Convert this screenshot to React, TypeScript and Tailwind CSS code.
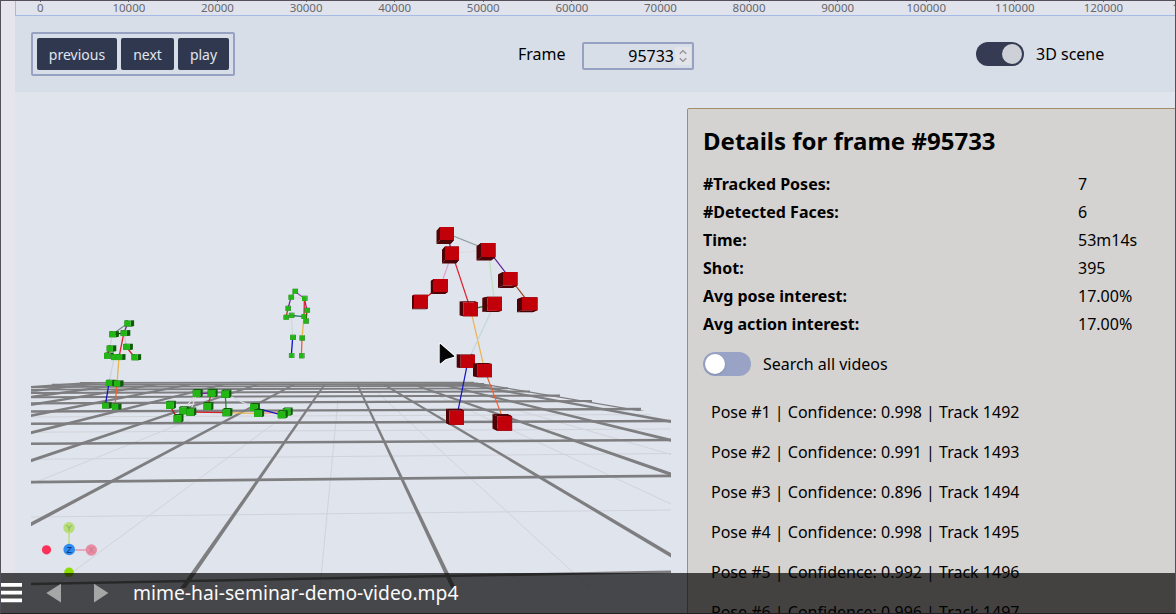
import React from "react";

type Pt = [number, number];

const ticks = Array.from({ length: 14 }, (_, i) => i * 10000);

const details: [string, string][] = [
  ["#Tracked Poses:", "7"],
  ["#Detected Faces:", "6"],
  ["Time:", "53m14s"],
  ["Shot:", "395"],
  ["Avg pose interest:", "17.00%"],
  ["Avg action interest:", "17.00%"],
];

const poses: [number, string, number][] = [
  [1, "0.998", 1492],
  [2, "0.991", 1493],
  [3, "0.896", 1494],
  [4, "0.998", 1495],
  [5, "0.992", 1496],
  [6, "0.996", 1497],
];

// Floor grid: rows run across the floor, rays recede towards the horizon.
const rows: [number, number, number, number, number][] = [
  [31, 584, 671, 571.7, 2.6],
  [31, 482.2, 671, 475.8, 2.7],
  [31, 443.8, 671, 440, 2.5],
  [31, 423.7, 671, 421, 2.4],
  [31, 411.5, 641, 409, 2.3],
  [31, 403.3, 592, 401, 2.2],
  [31, 397.2, 560, 395.6, 2.1],
  [31, 393, 530, 391.4, 2],
  [31, 389.6, 508, 388.4, 1.9],
  [31, 387, 492, 385.8, 1.9],
  [52, 384.8, 484, 384, 1.9],
  [80, 382.9, 474, 382.5, 1.7],
];

// x1, y1 (far), x2, y2 (near), width at the near end
const rays: [number, number, number, number, number][] = [
  [325, 384, 183, 588, 4.4],
  [293, 385, 31, 524.3, 3.6],
  [256, 385, 31, 460.7, 3.2],
  [225, 384, 31, 432.7, 3],
  [192, 384, 31, 415.7, 2.8],
  [159, 384, 31, 404.7, 2.6],
  [125, 384, 31, 397, 2.4],
  [92, 384, 31, 391.3, 2],
  [95, 382.6, 31, 387, 2],
  [357, 384, 453.5, 588, 4.2],
  [383, 384, 671, 555.3, 3.8],
  [412, 384, 671, 474.3, 3.3],
  [440, 384, 671, 440.3, 3],
  [466, 384, 671, 421.7, 2.8],
  [473, 382.4, 641, 411, 1.2],
];

const faint: [number, number, number, number][] = [
  [31, 517, 671, 510],
  [31, 459.3, 671, 453.5],
  [31, 432.2, 671, 429],
  [31, 417, 650, 414.5],
  [338, 400, 320, 588],
  [283, 417, 51, 588],
  [190, 420, 31, 484],
  [377, 392, 590, 588],
  [430, 392, 671, 504],
  [517, 410, 671, 454.5],
];

const redCubes: number[][] = [
  [440, 227, 14, 13, -3.5, 4],
  [445, 246.5, 14, 13.5, -3, 3.5],
  [481, 243, 14.5, 14, -4.5, 3.5],
  [503, 272, 14.5, 13.5, -5, 2.5],
  [522, 297.3, 15.5, 13, -5, 2],
  [433.8, 279, 14, 13, -3, 2],
  [414, 294.8, 14, 13.5, -2, 1],
  [463.3, 302.3, 14.5, 14, -3.7, -1],
  [487.3, 296.8, 14.7, 14, -5, 1.3],
  [460.7, 354.8, 14.3, 13.2, -4, -0.5],
  [477.7, 364, 14.3, 13.2, -4.7, -1],
  [449.3, 410.5, 14.7, 14.3, -3.3, -1.7],
  [497.3, 416.2, 14.8, 14.5, -4.8, -2.2],
];

const redBones: [number, number, string][] = [
  [0, 2, "#8c9a9c"],
  [0, 1, "#6b2a86"],
  [1, 2, "#e3d7dc"],
  [2, 3, "#5c1a94"],
  [3, 4, "#96401c"],
  [1, 5, "#d8a3cf"],
  [5, 6, "#d01018"],
  [1, 7, "#e0202c"],
  [2, 8, "#c0e0bd"],
  [7, 8, "#1d7a35"],
  [7, 10, "#eab44c"],
  [8, 9, "#c2d6dc"],
  [9, 11, "#1414c4"],
  [10, 12, "#f2602f"],
];

const figures: { w: number; h: number; ox: number; oy: number; pts: Pt[]; bones: [number, number, string][] }[] = [
  {
    w: 6.2, h: 5.8, ox: 3.4, oy: -0.4,
    pts: [[127.6, 323.5], [112.4, 334.3], [123.8, 333.2], [109.8, 348.6], [126.4, 347], [107.2, 355.8], [134.6, 357.3], [114.2, 357.2], [119, 357.2], [109, 383], [117, 383.6], [105.3, 405.6], [115, 406.8]],
    bones: [[0, 1, "#808a92"], [0, 2, "#702a86"], [1, 2, "#303030"], [1, 3, "#d8d0dc"], [3, 5, "#c01418"], [2, 4, "#d9c4d2"], [4, 6, "#d01820"], [2, 8, "#e0202c"], [7, 9, "#cdd5dd"], [8, 10, "#eab44c"], [9, 11, "#1414c4"], [10, 12, "#f2602f"]],
  },
  {
    w: 4.7, h: 4.8, ox: 0.7, oy: -0.3,
    pts: [[295, 291.4], [291, 297.4], [304.4, 298.5], [288, 308.5], [307, 310.4], [286, 317.4], [306, 321], [291.3, 315.5], [304, 316.6], [292.7, 337.5], [302, 338], [291.3, 355.6], [301.4, 355.8]],
    bones: [[0, 1, "#8c9a9c"], [0, 2, "#a050bc"], [1, 2, "#ddd8df"], [1, 3, "#7a2a9b"], [3, 5, "#b04030"], [2, 4, "#b02070"], [4, 6, "#d01018"], [2, 8, "#e0202c"], [7, 8, "#27796d"], [7, 9, "#ced8dd"], [8, 10, "#eab44c"], [9, 11, "#1414c4"], [10, 12, "#f2602f"]],
  },
  {
    w: 7.6, h: 7, ox: 2.3, oy: -1.1,
    pts: [[196.6, 393.6], [211.5, 393.4], [225.3, 394.2], [169.8, 405.3], [207.3, 406.6], [182.8, 410.8], [190.2, 412.2], [177.4, 418.7], [226.3, 412.7], [253.8, 407.5], [258, 413.5], [286.6, 412], [281.6, 414.8]],
    bones: [[0, 1, "#7422a0"], [1, 4, "#a04018"], [0, 5, "#d8d5e0"], [0, 6, "#e1d5da"], [3, 7, "#b01020"], [6, 8, "#d8202a"], [2, 8, "#208a2a"], [2, 9, "#d5dde4"], [8, 10, "#eab44c"], [10, 11, "#f5a38a"], [9, 12, "#1414c4"]],
  },
];

function Cube({ x, y, w, h, ox, oy, face, side }: { x: number; y: number; w: number; h: number; ox: number; oy: number; face: string; side: string }) {
  const c: Pt[] = [[x, y], [x + w, y], [x + w, y + h], [x, y + h]];
  return (
    <g>
      {c.map(([ax, ay], i) => {
        const [bx, by] = c[(i + 1) % 4];
        return <polygon key={i} fill={side} points={`${ax},${ay} ${bx},${by} ${bx + ox},${by + oy} ${ax + ox},${ay + oy}`} />;
      })}
      <rect x={x} y={y} width={w} height={h} fill={face} />
    </g>
  );
}

function Ray({ x1, y1, x2, y2, width }: { x1: number; y1: number; x2: number; y2: number; width: number }) {
  const length = Math.hypot(x2 - x1, y2 - y1);
  // horizontal extent of a one pixel thick stroke along this direction
  const spread = length / Math.abs(y2 - y1) / 2;
  const far = Math.min(1.9, width) * spread;
  const near = width * spread;
  return <polygon points={`${x1 - far},${y1} ${x1 + far},${y1} ${x2 + near},${y2} ${x2 - near},${y2}`} />;
}

function Scene() {
  const center = (c: number[]): Pt => [c[0] + c[2] / 2, c[1] + c[3] / 2];
  return (
    <svg className="block h-[480px] w-[640px]" viewBox="31 108 640 480">
      <g stroke="#d1d3da" strokeWidth="1">
        {faint.map(([a, b, c, d], i) => <line key={i} x1={a} y1={b} x2={c} y2={d} />)}
      </g>
      <g stroke="#7e7e80">
        {rows.map(([a, b, c, d, w], i) => <line key={i} x1={a} y1={b} x2={c} y2={d} strokeWidth={w} />)}
      </g>
      <g fill="#7e7e80">
        {rays.map(([a, b, c, d, w], i) => {
          // carry the ray slightly past the viewport so its cut end stays vertical
          const t = c === 31 || c === 671 ? 1.05 : 1;
          return <Ray key={i} x1={a} y1={b} x2={a + (c - a) * t} y2={b + (d - b) * t} width={w} />;
        })}
      </g>
      {figures.map((f, k) => (
        <g key={k}>
          {f.bones.map(([a, b, color], i) => (
            <line key={i} x1={f.pts[a][0]} y1={f.pts[a][1]} x2={f.pts[b][0]} y2={f.pts[b][1]} stroke={color} strokeWidth="1.3" />
          ))}
          {f.pts.map(([x, y], i) => (
            <Cube key={i} x={x - f.w / 2} y={y - f.h / 2} w={f.w} h={f.h} ox={f.ox} oy={f.oy} face="#22b714" side="#0c5c08" />
          ))}
        </g>
      ))}
      {redBones.map(([a, b, color], i) => {
        const [x1, y1] = center(redCubes[a]);
        const [x2, y2] = center(redCubes[b]);
        return <line key={i} x1={x1} y1={y1} x2={x2} y2={y2} stroke={color} strokeWidth="1.2" />;
      })}
      {redCubes.map(([x, y, w, h, ox, oy], i) => (
        <Cube key={i} x={x} y={y} w={w} h={h} ox={ox} oy={oy} face="#c20009" side="#4d0205" />
      ))}
      <line x1="69" y1="550" x2="69" y2="528" stroke="#bfe08a" strokeWidth="1.6" />
      <line x1="69" y1="550" x2="91" y2="550" stroke="#e0a0b2" strokeWidth="1.6" />
      <circle cx="69" cy="527.7" r="5.7" fill="#b7df78" />
      <circle cx="91.3" cy="550" r="5.7" fill="#e88ca2" />
      <circle cx="69.2" cy="549.5" r="5.8" fill="#2f8bf2" />
      <circle cx="46.5" cy="549.8" r="4.6" fill="#fb3158" />
      <circle cx="69" cy="572.3" r="4.8" fill="#8bdc00" />
      <g fontFamily="Liberation Sans, sans-serif" fontSize="9" textAnchor="middle">
        <text x="69" y="531" fill="#8cac60">Y</text>
        <text x="91.3" y="553.2" fill="#c97a8e">X</text>
        <text x="69.2" y="552.8" fill="#0d3566">Z</text>
      </g>
      <path d="M440.3 344.6v18.2l5.2-4.2 8.2-2.4z" fill="#050507" stroke="#fff" strokeWidth="3" strokeLinejoin="round" />
      <path d="M440.3 344.6v18.2l5.2-4.2 8.2-2.4z" fill="#050507" stroke="#050507" strokeWidth="1.2" strokeLinejoin="round" />
    </svg>
  );
}

export default function App() {
  return (
    <div className="relative h-[614px] w-[1176px] overflow-hidden bg-[#e6e5ee] pl-[15px] font-['Noto_Sans',sans-serif] text-base leading-6 text-black">
      <div className="flex h-[614px] w-[1161px] flex-col bg-[#dfe4ed]">
        <div className="h-4 shrink-0 overflow-hidden border-b border-l border-[#a5bbe6] bg-[#e1e3ec]">
          <div className="-ml-5 flex w-[1241px]">
            {ticks.map((t) => (
              <div key={t} className="flex w-[88.6px] shrink-0 flex-col items-center text-[11.5px] leading-[11px] text-[#66686e]">
                <div className="h-[2px] w-px bg-[#66686e]" />
                <div>{t}</div>
              </div>
            ))}
          </div>
        </div>
        <header className="flex h-[76px] shrink-0 items-start bg-[#d8dee8]">
          <div className="mt-4 ml-4 flex h-[44px] w-[204px] gap-1 rounded-[2px] border-2 border-[#97a2c3] p-1">
            <button className="h-8 w-20 rounded-[2px] bg-[#30384f] pt-px text-[14px] leading-[31px] text-[#e1e5ed]">previous</button>
            <button className="h-8 w-[53px] rounded-[2px] bg-[#30384f] pt-px text-[14px] leading-[31px] text-[#e1e5ed]">next</button>
            <button className="h-8 w-[51px] rounded-[2px] bg-[#30384f] pt-px text-[14px] leading-[31px] text-[#e1e5ed]">play</button>
          </div>
          <label className="mt-[26px] ml-[283px] w-[64px]">Frame</label>
          <div className="mt-[26px] flex h-7 w-28 items-center justify-end rounded-[2px] border-2 border-[#97a2c3] pr-px">
            <span>95733</span>
            <span className="ml-px flex h-[18px] w-[16px] items-center justify-center bg-[#e3e4ea]">
              <svg className="h-[14px] w-[8px]" viewBox="0 0 8 14" fill="none" stroke="#8f9197" strokeWidth="1.3">
                <path d="M.8 4.8L4 1.6l3.2 3.2M.8 9.2L4 12.4l3.2-3.2" />
              </svg>
            </span>
          </div>
          <div className="mt-[26px] ml-[282px] flex h-6 items-center gap-3">
            <div className="flex h-6 w-12 items-center justify-end rounded-full bg-[#343b53] pr-0.5">
              <div className="size-5 rounded-full bg-[#cdd0d6]" />
            </div>
            <span>3D scene</span>
          </div>
        </header>
        <main className="flex h-[522px] shrink-0 pt-4 pl-4">
          <Scene />
          <section className="ml-4 h-[520px] w-[489px] shrink-0 overflow-hidden rounded-tl-[2px] border border-[#a48d68] bg-[#d5d3d1] p-[15px]">
            <h1 className="mt-px text-2xl leading-8 font-bold">Details for frame #95733</h1>
            <dl className="mt-[13px] pb-[14px]">
              {details.map(([k, v]) => (
                <div key={k} className="flex h-7 items-center">
                  <dt className="w-[375px] font-bold">{k}</dt>
                  <dd>{v}</dd>
                </div>
              ))}
            </dl>
            <div className="flex h-6 items-center gap-3">
              <div className="flex h-6 w-12 items-center rounded-full bg-[#98a3c5] pl-0.5">
                <div className="size-5 rounded-full bg-white shadow-sm" />
              </div>
              <span>Search all videos</span>
            </div>
            <ul className="mt-4 pl-2">
              {poses.map(([n, c, t]) => (
                <li key={n} className="flex h-10 items-center whitespace-pre">{`Pose #${n} | Confidence: ${c} | Track ${t}`}</li>
              ))}
            </ul>
          </section>
        </main>
      </div>
      <footer className="absolute bottom-0 left-0 flex h-[41px] w-full items-center bg-[#040404]/70 pb-px">
        <svg className="h-5 w-[22px]" viewBox="0 0 22 20" fill="#fff">
          <path d="M1 0h21.5v3.8H1zM1 7.8h21.5v3.6H1zM1 15.6h21.5v3.7H1z" />
        </svg>
        <svg className="ml-[24px] h-5 w-[63px]" viewBox="0 0 63 20" fill="#a6a6a6">
          <path d="M15 .8v18.6L.3 10.1zM48 .8v18.6l14.4-9.3z" />
        </svg>
        <span className="-mt-px ml-[24px] text-[19.25px] text-[#fafafa]">mime-hai-seminar-demo-video.mp4</span>
      </footer>
      <div className="pointer-events-none absolute inset-0 border border-[#554f59] border-b-[#241f24]" />
    </div>
  );
}
